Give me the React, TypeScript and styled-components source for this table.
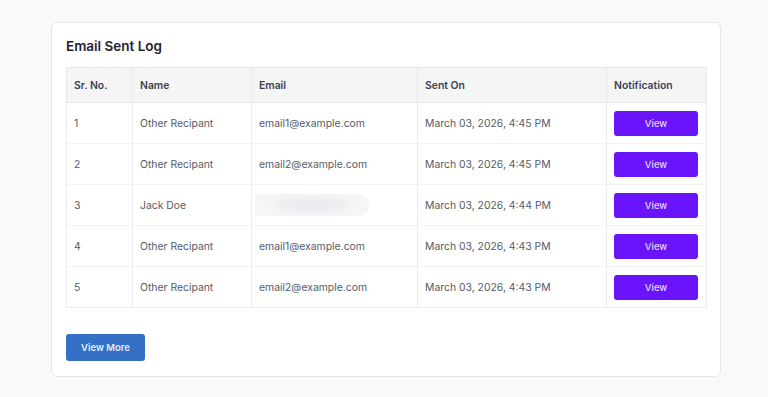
import * as React from "react";
import styled, { createGlobalStyle } from "styled-components";

const GlobalStyle = createGlobalStyle`
  html, body {
    margin: 0;
    padding: 0;
    background: #f9f9fa;
    font-family: Inter, "Noto Sans", sans-serif;
  }
`;

type LogRow = {
  id: number;
  name: string;
  email: string | null;
  sentOn: string;
};

const rows: LogRow[] = [
  { id: 1, name: "Other Recipant", email: "email1@example.com", sentOn: "March 03, 2026, 4:45 PM" },
  { id: 2, name: "Other Recipant", email: "email2@example.com", sentOn: "March 03, 2026, 4:45 PM" },
  { id: 3, name: "Jack Doe", email: null, sentOn: "March 03, 2026, 4:44 PM" },
  { id: 4, name: "Other Recipant", email: "email1@example.com", sentOn: "March 03, 2026, 4:43 PM" },
  { id: 5, name: "Other Recipant", email: "email2@example.com", sentOn: "March 03, 2026, 4:43 PM" },
];

const columns = [
  { label: "Sr. No.", width: 66 },
  { label: "Name", width: 119 },
  { label: "Email", width: 166 },
  { label: "Sent On", width: 189 },
  { label: "Notification", width: 100 },
];

export default function App() {
  return (
    <>
      <GlobalStyle />
      <Page>
        <Card>
          <Title>Email Sent Log</Title>
          <Table>
            <colgroup>
              {columns.map((c) => (
                <col key={c.label} style={{ width: c.width }} />
              ))}
            </colgroup>
            <thead>
              <tr>
                {columns.map((c) => (
                  <Th key={c.label}>{c.label}</Th>
                ))}
              </tr>
            </thead>
            <tbody>
              {rows.map((r) => (
                <tr key={r.id}>
                  <Td>{r.id}</Td>
                  <Td>{r.name}</Td>
                  <Td $tight={!r.email}>
                    {r.email ?? (
                      <Redacted>
                        <RedactedBlur />
                      </Redacted>
                    )}
                  </Td>
                  <Td>{r.sentOn}</Td>
                  <Td>
                    <ViewButton>View</ViewButton>
                  </Td>
                </tr>
              ))}
            </tbody>
          </Table>
          <MoreButton>View More</MoreButton>
        </Card>
      </Page>
    </>
  );
}

const Page = styled.div`
  padding: 22px 0 0 51px;
`;

const Card = styled.div`
  width: 670px;
  box-sizing: border-box;
  padding: 14px 14px 15px;
  background: #ffffff;
  border: 1px solid #e6e6e8;
  border-radius: 6px;
`;

const Title = styled.h2`
  margin: 0 0 12px;
  font-size: 13.5px;
  line-height: 18px;
  font-weight: 600;
  color: #1f2330;
`;

const Table = styled.table`
  width: 640px;
  table-layout: fixed;
  border-collapse: collapse;
  border-left: 1px solid #ececee;
  border-right: 1px solid #ececee;
  border-bottom: 1px solid #ececee;
`;

const Th = styled.th`
  height: 34px;
  padding: 0 7px;
  text-align: left;
  font-size: 10.4px;
  font-weight: 600;
  color: #3d4250;
  background: #f5f5f6;
  border: 1px solid #e8e8ea;
`;

const Td = styled.td<{ $tight?: boolean }>`
  height: 41px;
  box-sizing: border-box;
  padding: 0 ${(p) => (p.$tight ? "3px" : "7px")};
  font-size: 10.4px;
  color: #565b66;
  white-space: nowrap;
  border-left: 1px solid #ececee;
  border-right: 1px solid #ececee;
  border-top: 1px solid #f3f3f4;
`;

const Redacted = styled.span`
  display: flex;
  align-items: center;
  justify-content: center;
  width: 114px;
  height: 22px;
  background: #f6f6f7;
  border-radius: 2px 10px 10px 2px;
`;

const RedactedBlur = styled.span`
  width: 76px;
  height: 12px;
  border-radius: 50%;
  background: #e6e9ec;
  filter: blur(4px);
`;

const ViewButton = styled.button`
  display: block;
  width: 84px;
  height: 25px;
  border: none;
  border-radius: 3px;
  background: #6a14fb;
  color: #e4d8ff;
  font-family: inherit;
  font-size: 9.5px;
  font-weight: 500;
  cursor: pointer;
`;

const MoreButton = styled.button`
  display: block;
  margin-top: 26px;
  width: 79px;
  height: 27px;
  border: none;
  border-radius: 3px;
  background: #3370c6;
  color: #e3ecf8;
  font-family: inherit;
  font-size: 9.5px;
  font-weight: 600;
  cursor: pointer;
`;
